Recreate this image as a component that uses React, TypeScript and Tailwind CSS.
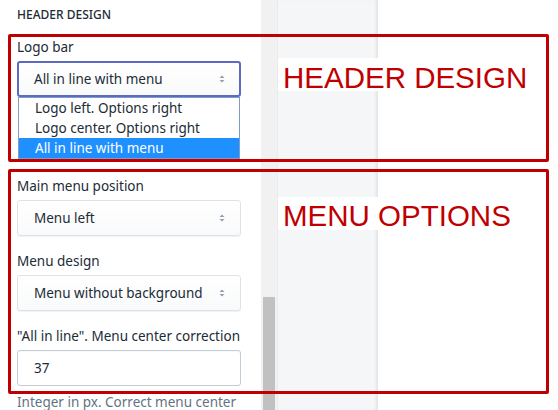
import React from 'react';

const font = { fontFamily: '"Noto Sans", "Open Sans", sans-serif' };
const annotFont = { fontFamily: '"Liberation Sans", Arial, sans-serif' };

function Chevrons() {
  return (
    <svg width="8" height="10" viewBox="0 0 8 10" className="shrink-0">
      <path d="M4 1.5 L6.5 4 L1.5 4 Z" fill="#919eab" />
      <path d="M4 8.5 L6.5 6 L1.5 6 Z" fill="#919eab" />
    </svg>
  );
}

function SelectBox({ value, focused }: { value: string; focused?: boolean }) {
  return (
    <div
      className={
        'flex items-center justify-between h-[36px] rounded-[3px] bg-gradient-to-b from-white to-[#f9fafb] text-[13.5px] text-[#212b36] ' +
        (focused
          ? 'border-2 border-[#5c6ac4] pl-[15px] pr-[13px]'
          : 'border border-[#dfe3e8] pl-[16px] pr-[14px] shadow-[0_1px_0_rgba(22,29,37,0.05)]')
      }
    >
      <span>{value}</span>
      <Chevrons />
    </div>
  );
}

function Field({ label, children }: { label: string; children: React.ReactNode }) {
  return (
    <div className="flex flex-col gap-[4px]">
      <div className="text-[13.5px] leading-[19px] text-[#212b36]">{label}</div>
      {children}
    </div>
  );
}

export default function App() {
  const logoOptions = ['Logo left. Options right', 'Logo center. Options right', 'All in line with menu'];

  return (
    <div className="relative flex w-[558px] h-[410px] overflow-hidden bg-white" style={font}>
      {/* settings column */}
      <div className="w-[261px] shrink-0 pl-[17px] pr-[20px] bg-white flex flex-col">
        <div className="pt-[7px] text-[12px] leading-[16px] font-medium uppercase text-[#212b36]">Header design</div>

        <div className="mt-[15px] mb-[80px]">
          <Field label="Logo bar">
            <div className="relative">
              <SelectBox value="All in line with menu" focused />
              <div className="absolute left-[1px] right-[1px] top-full z-10 bg-white border border-[#7f9cc9] text-[13.5px] text-[#212b36]">
                {logoOptions.map((opt, i) => (
                  <div
                    key={opt}
                    className={'h-[20px] leading-[20px] pl-[16px] ' + (i === 2 ? 'bg-[#1e90ff] text-white' : '')}
                  >
                    {opt}
                  </div>
                ))}
              </div>
            </div>
          </Field>
        </div>

        <div className="flex flex-col gap-[16px]">
          <Field label="Main menu position">
            <SelectBox value="Menu left" />
          </Field>
          <Field label="Menu design">
            <SelectBox value="Menu without background" />
          </Field>
          <Field label={'"All in line". Menu center correction'}>
            <div className="h-[36px] flex items-center pl-[16px] rounded-[3px] border border-[#c4cdd5] bg-white text-[13.5px] text-[#212b36] shadow-[inset_0_1px_0_rgba(99,115,129,0.05)]">
              37
            </div>
            <p className="mt-[2px] text-[13.5px] leading-[20px] text-[#637381]">Integer in px. Correct menu center</p>
          </Field>
        </div>
      </div>

      {/* scrollbar */}
      <div className="relative w-[16px] shrink-0 bg-[#f1f1f1]">
        <div className="absolute left-[2px] top-[297px] w-[12px] h-[140px] bg-[#c1c1c1]" />
      </div>

      {/* preview side panel */}
      <div className="w-[101px] shrink-0 bg-[#f4f6f8] border-l border-[#ebebeb] shadow-[inset_-3px_0_3px_-1px_rgba(0,0,0,0.08)]" />

      <div className="flex-1 bg-white" />

      {/* annotations */}
      <div className="absolute left-[8px] top-[34px] w-[541px] h-[128px] border-[3px] border-[#c00000] rounded-[2px] pointer-events-none z-20" />
      <div className="absolute left-[8px] top-[169px] w-[541px] h-[225px] border-[3px] border-[#c00000] rounded-[2px] pointer-events-none z-20" />

      <div
        className="absolute left-[278px] top-[58px] h-[33px] pl-[5px] pr-[2px] pt-[5px] bg-white text-[29.5px] leading-none text-[#c00000]"
        style={annotFont}
      >
        HEADER DESIGN
      </div>
      <div
        className="absolute left-[278px] top-[197px] h-[33px] pl-[5px] pr-[2px] pt-[4px] bg-white text-[29.5px] leading-none text-[#c00000]"
        style={annotFont}
      >
        MENU OPTIONS
      </div>
    </div>
  );
}
